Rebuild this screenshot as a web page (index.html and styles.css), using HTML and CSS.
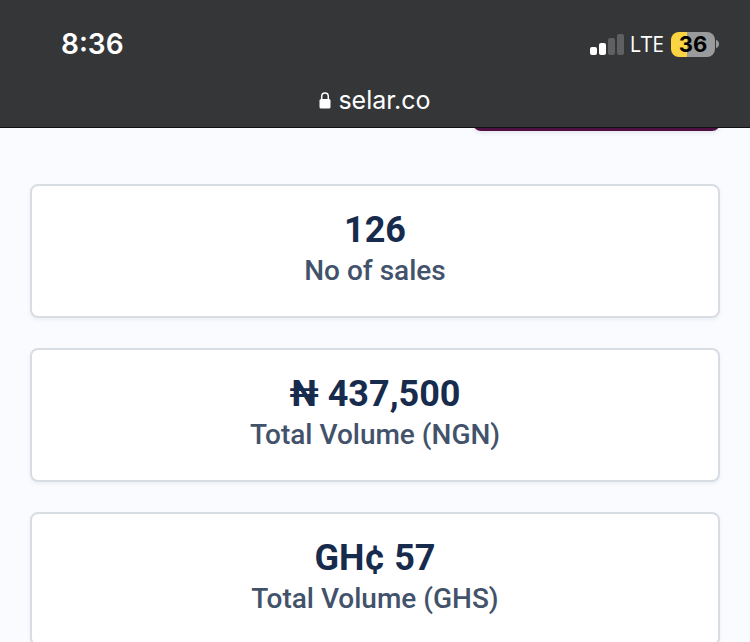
FILE: index.html
```html
<!DOCTYPE html>
<html lang="en">
<head>
    <meta charset="UTF-8">
    <meta name="viewport" content="width=device-width, initial-scale=1.0">
    <title>selar.co</title>
    <link rel="stylesheet" href="styles.css">
</head>
<body>
    <header class="browser">
        <div class="status-bar">
            <span class="time">8:36</span>
            <div class="status-icons">
                <svg class="signal" width="34" height="21" viewBox="0 0 34 21" aria-hidden="true">
                    <rect x="0" y="13" width="7" height="8" rx="2" fill="#fff"/>
                    <rect x="9" y="9" width="7" height="12" rx="2" fill="#fff"/>
                    <rect x="18" y="4" width="7" height="17" rx="2" fill="#5f6062"/>
                    <rect x="27" y="0" width="7" height="21" rx="2" fill="#5f6062"/>
                </svg>
                <span class="network">LTE</span>
                <div class="battery">
                    <span class="battery-level">36</span>
                    <svg width="3" height="8" viewBox="0 0 3 8" aria-hidden="true">
                        <path d="M0 0C4 1 4 7 0 8Z" fill="#9a9b9d"/>
                    </svg>
                </div>
            </div>
        </div>
        <div class="address-bar">
            <svg class="lock" width="12" height="17" viewBox="0 0 12 17" aria-hidden="true">
                <path d="M2.7 8V4.6C2.7 2.3 4 1 6 1S9.3 2.3 9.3 4.6V8" fill="none" stroke="#fff" stroke-width="1.5"/>
                <rect x="0.5" y="7" width="11" height="9.5" rx="1.5" fill="#fff"/>
            </svg>
            <span>selar.co</span>
        </div>
    </header>
    <main class="content">
        <button class="action" type="button" aria-label="Action"></button>
        <section class="card">
            <h2>126</h2>
            <p>No of sales</p>
        </section>
        <section class="card">
            <h2>₦ 437,500</h2>
            <p>Total Volume (NGN)</p>
        </section>
        <section class="card">
            <h2>GH¢ 57</h2>
            <p>Total Volume (GHS)</p>
        </section>
    </main>
</body>
</html>
```

FILE: styles.css
```css
* {
    box-sizing: border-box;
}

body {
    display: flex;
    flex-direction: column;
    height: 100vh;
    margin: 0;
    overflow: hidden;
    background-color: #fafbff;
    color: #172b4d;
    font-family: Roboto, sans-serif;
}

.browser {
    flex-shrink: 0;
    padding-top: 28px;
    border-bottom: 1px solid #111012;
    background-color: #353638;
    color: #fff;
    font-family: Inter, sans-serif;
}

.status-bar {
    display: flex;
    align-items: center;
    justify-content: space-between;
    height: 32px;
    padding: 0 31px 0 61px;
}

.time {
    font-size: 28px;
    font-weight: 600;
    line-height: 32px;
}

.status-icons {
    display: flex;
    align-items: center;
}

.network {
    margin: 0 7px 0 6px;
    font-family: "Open Sans", sans-serif;
    font-size: 21px;
    font-weight: 500;
    line-height: 32px;
}

.battery {
    display: flex;
    align-items: center;
    gap: 1px;
}

.battery-level {
    width: 44px;
    border-radius: 8px;
    background: linear-gradient(to right, #fbd541 36%, #9a9b9d 36%);
    color: #000;
    font-size: 22px;
    font-weight: 700;
    line-height: 25px;
    text-align: center;
}

.address-bar {
    display: flex;
    align-items: center;
    justify-content: center;
    gap: 7px;
    height: 67px;
    padding-top: 13px;
    font-size: 25px;
    line-height: 32px;
}

.content {
    display: flex;
    flex: 1;
    flex-direction: column;
    gap: 30px;
    min-height: 0;
    padding: 0 30px;
    overflow: hidden;
}

/* scrolled up under the browser bar */
.action {
    flex-shrink: 0;
    align-self: flex-end;
    width: 247px;
    height: 76px;
    margin: -73px 0 23px;
    border: 0;
    border-radius: 8px;
    background-color: #4f1141;
    box-shadow: 0 2px 4px rgba(50, 50, 93, 0.1);
}

.card {
    flex-shrink: 0;
    padding: 24px 24px 29px;
    border: 2px solid #d8dce3;
    border-radius: 8px;
    background-color: #fff;
    box-shadow: 0 2px 4px rgba(23, 43, 77, 0.06);
    text-align: center;
}

.card h2 {
    margin: 0 0 5px;
    font-size: 36px;
    font-weight: 700;
    line-height: 40px;
}

.card p {
    margin: 0;
    color: #42526b;
    font-size: 28px;
    font-weight: 500;
    line-height: 32px;
}
```
